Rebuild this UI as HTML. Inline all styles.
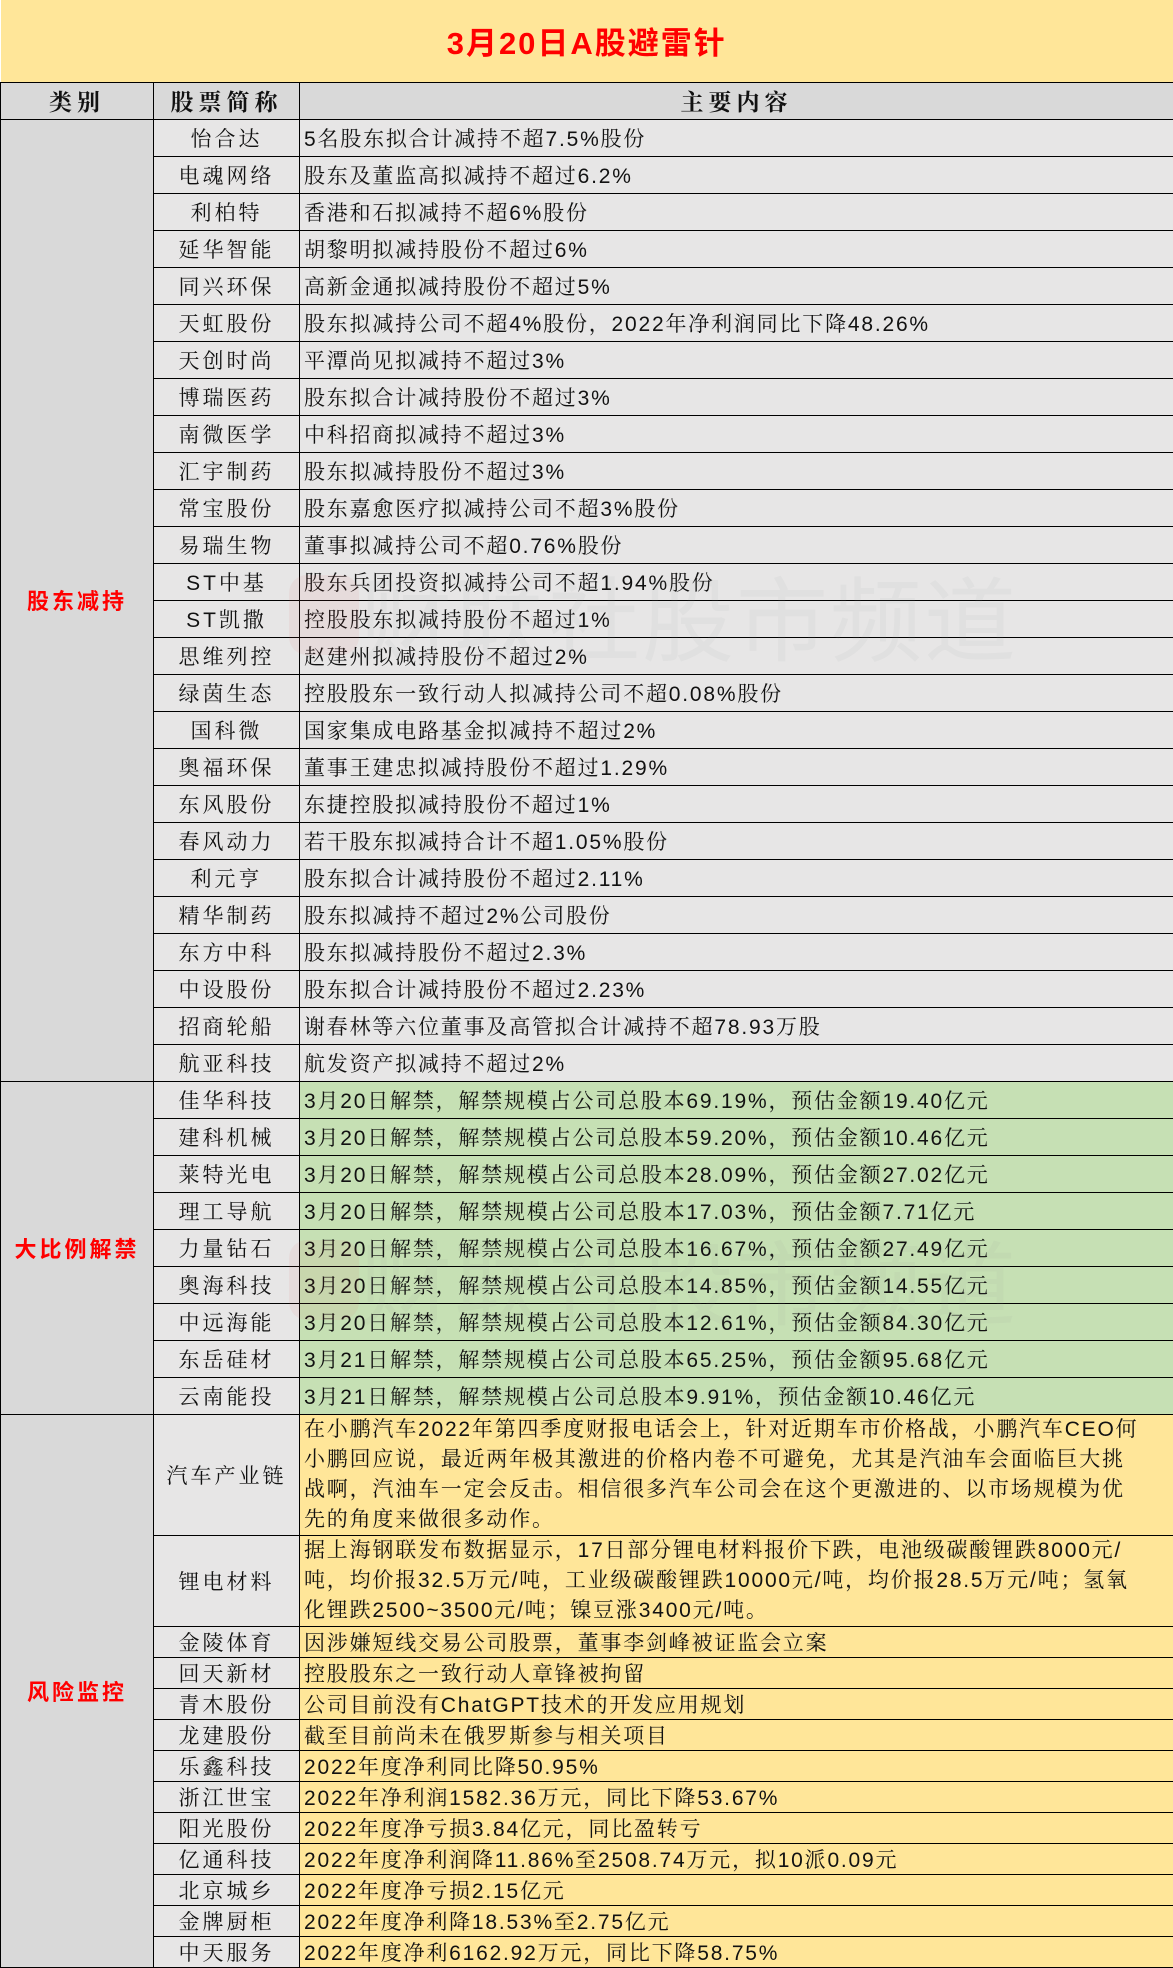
<!DOCTYPE html>
<html><head><meta charset="utf-8">
<style>
*{margin:0;padding:0;box-sizing:border-box}
body{width:1173px;height:1955px;background:#fff;overflow:hidden;position:relative;font-family:"Liberation Sans","Noto Serif CJK SC",serif;}
table{border-collapse:collapse;table-layout:fixed;width:1173px;position:absolute;top:0;left:0}
td{border:1px solid #000;font-size:21px;letter-spacing:1.8px;color:#111;white-space:nowrap;overflow:hidden;padding:0}
.t{background:#FFE699;height:82px;text-align:center;color:#f00;font-size:31px;font-weight:bold;font-family:"Liberation Sans","Noto Sans CJK SC",sans-serif;letter-spacing:2px;border-top:none;border-left:none}
.h td{background:#D9D9D9;height:37px;text-align:center;font-weight:bold;font-size:23px;letter-spacing:5px;font-family:"Liberation Sans","Noto Serif CJK SC",serif}
.c{background:#D9D9D9;text-align:center;color:#f00;font-weight:bold;font-size:22px;letter-spacing:3px;font-family:"Liberation Sans","Noto Sans CJK SC",sans-serif}
.n{background:#E7E6E6;text-align:center;letter-spacing:3px}
.x{background:#E7E6E6;padding-left:4px}
.g{background:#C6E0B4;padding-left:4px}
.y{background:#FFE699;padding-left:4px}
tr.r td{height:37px}
tr.s td{height:30px}
.m{line-height:30px}
.wm{position:absolute;font-family:"Noto Sans CJK SC",sans-serif;font-size:92px;color:rgba(150,150,150,0.08);letter-spacing:2px;white-space:nowrap}
.ic{position:absolute;width:70px;height:80px;border-radius:18px;background:rgba(230,80,80,0.07)}
</style></head><body>
<table>
<colgroup><col style="width:153px"><col style="width:146px"><col style="width:874px"></colgroup>
<tr><td class="t" colspan="3">3月20日A股避雷针</td></tr>
<tr class="h"><td>类别</td><td>股票简称</td><td>主要内容</td></tr>
<tr class="r"><td class="c" rowspan="26">股东减持</td><td class="n">怡合达</td><td class="x">5名股东拟合计减持不超7.5%股份</td></tr>
<tr class="r"><td class="n">电魂网络</td><td class="x">股东及董监高拟减持不超过6.2%</td></tr>
<tr class="r"><td class="n">利柏特</td><td class="x">香港和石拟减持不超6%股份</td></tr>
<tr class="r"><td class="n">延华智能</td><td class="x">胡黎明拟减持股份不超过6%</td></tr>
<tr class="r"><td class="n">同兴环保</td><td class="x">高新金通拟减持股份不超过5%</td></tr>
<tr class="r"><td class="n">天虹股份</td><td class="x">股东拟减持公司不超4%股份，2022年净利润同比下降48.26%</td></tr>
<tr class="r"><td class="n">天创时尚</td><td class="x">平潭尚见拟减持不超过3%</td></tr>
<tr class="r"><td class="n">博瑞医药</td><td class="x">股东拟合计减持股份不超过3%</td></tr>
<tr class="r"><td class="n">南微医学</td><td class="x">中科招商拟减持不超过3%</td></tr>
<tr class="r"><td class="n">汇宇制药</td><td class="x">股东拟减持股份不超过3%</td></tr>
<tr class="r"><td class="n">常宝股份</td><td class="x">股东嘉愈医疗拟减持公司不超3%股份</td></tr>
<tr class="r"><td class="n">易瑞生物</td><td class="x">董事拟减持公司不超0.76%股份</td></tr>
<tr class="r"><td class="n">ST中基</td><td class="x">股东兵团投资拟减持公司不超1.94%股份</td></tr>
<tr class="r"><td class="n">ST凯撒</td><td class="x">控股股东拟减持股份不超过1%</td></tr>
<tr class="r"><td class="n">思维列控</td><td class="x">赵建州拟减持股份不超过2%</td></tr>
<tr class="r"><td class="n">绿茵生态</td><td class="x">控股股东一致行动人拟减持公司不超0.08%股份</td></tr>
<tr class="r"><td class="n">国科微</td><td class="x">国家集成电路基金拟减持不超过2%</td></tr>
<tr class="r"><td class="n">奥福环保</td><td class="x">董事王建忠拟减持股份不超过1.29%</td></tr>
<tr class="r"><td class="n">东风股份</td><td class="x">东捷控股拟减持股份不超过1%</td></tr>
<tr class="r"><td class="n">春风动力</td><td class="x">若干股东拟减持合计不超1.05%股份</td></tr>
<tr class="r"><td class="n">利元亨</td><td class="x">股东拟合计减持股份不超过2.11%</td></tr>
<tr class="r"><td class="n">精华制药</td><td class="x">股东拟减持不超过2%公司股份</td></tr>
<tr class="r"><td class="n">东方中科</td><td class="x">股东拟减持股份不超过2.3%</td></tr>
<tr class="r"><td class="n">中设股份</td><td class="x">股东拟合计减持股份不超过2.23%</td></tr>
<tr class="r"><td class="n">招商轮船</td><td class="x">谢春林等六位董事及高管拟合计减持不超78.93万股</td></tr>
<tr class="r"><td class="n">航亚科技</td><td class="x">航发资产拟减持不超过2%</td></tr>
<tr class="r"><td class="c" rowspan="9">大比例解禁</td><td class="n">佳华科技</td><td class="g">3月20日解禁，解禁规模占公司总股本69.19%，预估金额19.40亿元</td></tr>
<tr class="r"><td class="n">建科机械</td><td class="g">3月20日解禁，解禁规模占公司总股本59.20%，预估金额10.46亿元</td></tr>
<tr class="r"><td class="n">莱特光电</td><td class="g">3月20日解禁，解禁规模占公司总股本28.09%，预估金额27.02亿元</td></tr>
<tr class="r"><td class="n">理工导航</td><td class="g">3月20日解禁，解禁规模占公司总股本17.03%，预估金额7.71亿元</td></tr>
<tr class="r"><td class="n">力量钻石</td><td class="g">3月20日解禁，解禁规模占公司总股本16.67%，预估金额27.49亿元</td></tr>
<tr class="r"><td class="n">奥海科技</td><td class="g">3月20日解禁，解禁规模占公司总股本14.85%，预估金额14.55亿元</td></tr>
<tr class="r"><td class="n">中远海能</td><td class="g">3月20日解禁，解禁规模占公司总股本12.61%，预估金额84.30亿元</td></tr>
<tr class="r"><td class="n">东岳硅材</td><td class="g">3月21日解禁，解禁规模占公司总股本65.25%，预估金额95.68亿元</td></tr>
<tr class="r"><td class="n">云南能投</td><td class="g">3月21日解禁，解禁规模占公司总股本9.91%，预估金额10.46亿元</td></tr>
<tr><td class="c" rowspan="13">风险监控</td><td class="n" style="height:120px">汽车产业链</td><td class="y m">在小鹏汽车2022年第四季度财报电话会上，针对近期车市价格战，小鹏汽车CEO何<br>小鹏回应说，最近两年极其激进的价格内卷不可避免，尤其是汽油车会面临巨大挑<br>战啊，汽油车一定会反击。相信很多汽车公司会在这个更激进的、以市场规模为优<br>先的角度来做很多动作。</td></tr>
<tr><td class="n" style="height:90px">锂电材料</td><td class="y m">据上海钢联发布数据显示，17日部分锂电材料报价下跌，电池级碳酸锂跌8000元/<br>吨，均价报32.5万元/吨，工业级碳酸锂跌10000元/吨，均价报28.5万元/吨；氢氧<br>化锂跌2500~3500元/吨；镍豆涨3400元/吨。</td></tr>
<tr class="s"><td class="n">金陵体育</td><td class="y">因涉嫌短线交易公司股票，董事李剑峰被证监会立案</td></tr>
<tr class="s"><td class="n">回天新材</td><td class="y">控股股东之一致行动人章锋被拘留</td></tr>
<tr class="s"><td class="n">青木股份</td><td class="y">公司目前没有ChatGPT技术的开发应用规划</td></tr>
<tr class="s"><td class="n">龙建股份</td><td class="y">截至目前尚未在俄罗斯参与相关项目</td></tr>
<tr class="s"><td class="n">乐鑫科技</td><td class="y">2022年度净利同比降50.95%</td></tr>
<tr class="s"><td class="n">浙江世宝</td><td class="y">2022年净利润1582.36万元，同比下降53.67%</td></tr>
<tr class="s"><td class="n">阳光股份</td><td class="y">2022年度净亏损3.84亿元，同比盈转亏</td></tr>
<tr class="s"><td class="n">亿通科技</td><td class="y">2022年度净利润降11.86%至2508.74万元，拟10派0.09元</td></tr>
<tr class="s"><td class="n">北京城乡</td><td class="y">2022年度净亏损2.15亿元</td></tr>
<tr class="s"><td class="n">金牌厨柜</td><td class="y">2022年度净利降18.53%至2.75亿元</td></tr>
<tr class="s"><td class="n">中天服务</td><td class="y">2022年度净利6162.92万元，同比下降58.75%</td></tr>
</table>
<div class="ic" style="left:289px;top:575px"></div>
<div class="wm" style="left:360px;top:548px">财联社股市频道</div>
<div class="ic" style="left:289px;top:1240px"></div>
<div class="wm" style="left:360px;top:1212px">财联社股市频道</div>
</body></html>
